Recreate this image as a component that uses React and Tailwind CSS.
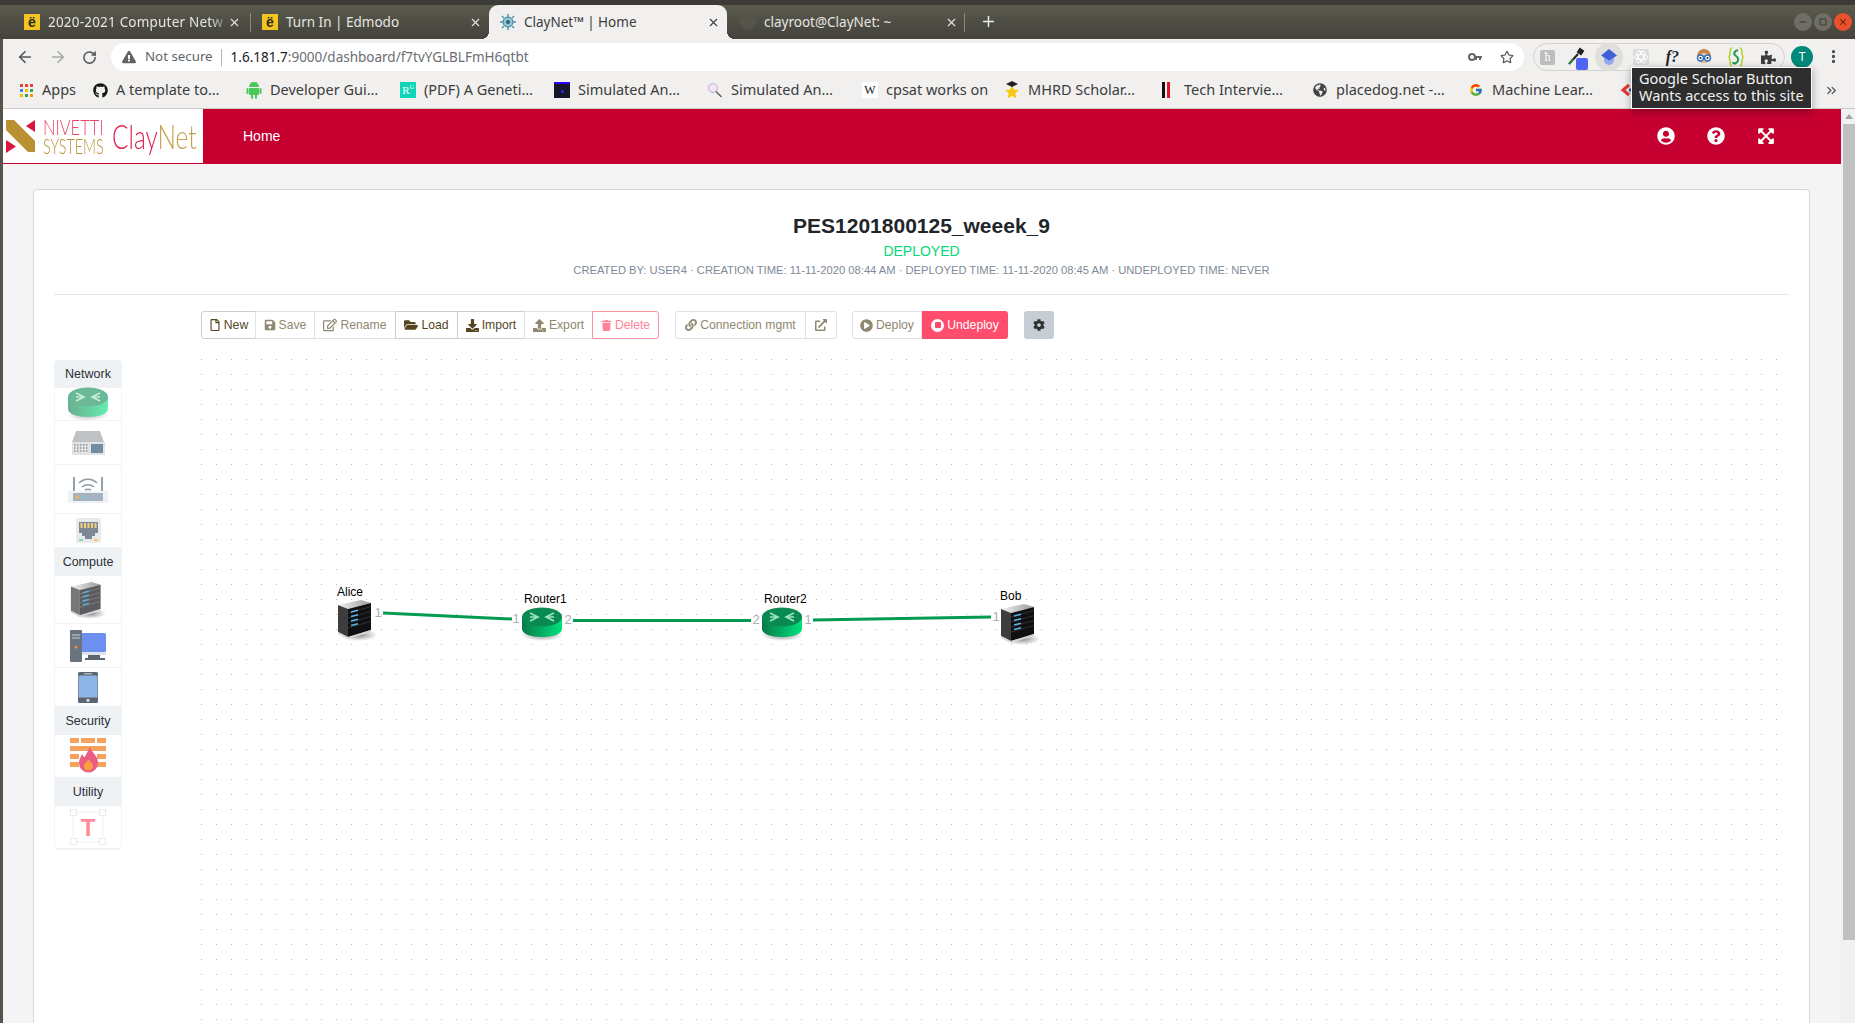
import React from 'react';
import { FaRegFile, FaSave, FaRegEdit, FaFolderOpen, FaDownload, FaUpload, FaTrash, FaLink, FaExternalLinkAlt, FaPlayCircle, FaCog, FaUserCircle, FaQuestionCircle, FaExpandArrowsAlt, FaGithub, FaGlobeAmericas, FaPuzzlePiece, FaExclamationTriangle, FaRegStar } from 'react-icons/fa';
import { FcGoogle } from 'react-icons/fc';
import { ArrowLeft, ArrowRight, RotateCw, X, Plus, Minus, Square, ChevronsRight, EllipsisVertical } from 'lucide-react';

const uiFont = "font-['Noto_Sans',sans-serif]";

const EdmodoIcon = () => (
  <span className="flex h-4 w-4 items-center justify-center bg-[#f4c522] font-['Liberation_Sans',sans-serif] text-[14px] font-bold leading-none text-[#2d2a1e]">ë</span>
);

const ClayIcon = () => (
  <svg width="16" height="16" viewBox="0 0 16 16">
    <circle cx="8" cy="8" r="5" fill="#8fc7d8" stroke="#3d7f97" strokeWidth="1" />
    <circle cx="8" cy="8" r="2" fill="#2a6078" />
    <path d="M8 0v3M8 13v3M0 8h3M13 8h3M2 2l2 2M12 12l2 2M14 2l-2 2M4 12l-2 2" stroke="#4b8fa6" strokeWidth="1.4" />
  </svg>
);

const tabs = [
  { title: '2020-2021 Computer Netw', icon: <EdmodoIcon />, fade: true },
  { title: 'Turn In | Edmodo', icon: <EdmodoIcon /> },
  { title: 'ClayNet™ | Home', icon: <ClayIcon />, active: true },
  { title: 'clayroot@ClayNet: ~', icon: <span className="h-4 w-4 rounded-full bg-[#55544b]" />, pad: true },
];

const TabStrip = () => (
  <div className={`flex h-[39px] shrink-0 items-end border-t-[5px] border-[#3c3b37] bg-gradient-to-b from-[#5a5a4e] to-[#43423c] pl-[13px] ${uiFont}`}>
    {tabs.map((tab, i) => (
      <div key={tab.title} className={`relative flex h-[34px] w-[238px] items-center pr-[7px] text-[13.5px] ${tab.pad ? 'pl-[13px]' : 'pl-[11px]'} ${tab.active ? 'rounded-t-[9px] bg-[#f1f0ee] text-[#3c3c3c]' : 'text-[#e6e5e0]'}`}>
        {tab.active && <span className="absolute bottom-0 -left-[8px] h-2 w-2 bg-[radial-gradient(circle_at_0_0,transparent_8px,#f1f0ee_8px)]" />}
        {tab.active && <span className="absolute bottom-0 -right-[8px] h-2 w-2 bg-[radial-gradient(circle_at_100%_0,transparent_8px,#f1f0ee_8px)]" />}
        <span className="flex w-4 shrink-0 justify-center">{tab.icon}</span>
        <span className={`ml-[8px] flex-1 whitespace-nowrap ${tab.fade ? 'tracking-[0.2px] [mask-image:linear-gradient(to_right,black_88%,transparent)]' : ''}`}>{tab.title}</span>
        <X size={13} strokeWidth={2} className={`shrink-0 ${tab.fade ? '-translate-x-[3px]' : ''}`} />
        {(i === 0 || i === 3) && <span className="absolute right-0 top-[8px] h-[19px] w-px bg-[#8a897f]" />}
      </div>
    ))}
    <Plus size={17} strokeWidth={2} className="mb-[9px] ml-[15px] text-[#f0f0ea]" />
    <div className="mb-[8px] ml-auto mr-[3px] flex gap-[2px]">
      <span className="flex h-[18px] w-[18px] items-center justify-center rounded-full bg-[#6f6e66] text-[#33322d]"><Minus size={10} strokeWidth={2.5} /></span>
      <span className="flex h-[18px] w-[18px] items-center justify-center rounded-full bg-[#6f6e66] text-[#33322d]"><Square size={8} strokeWidth={2.5} /></span>
      <span className="flex h-[18px] w-[18px] items-center justify-center rounded-full bg-[#e9502c] text-[#5a1d0c]"><X size={10} strokeWidth={2.5} /></span>
    </div>
  </div>
);

const Toolbar = () => (
  <div className={`flex h-[35px] items-start bg-[#f1f0ee] pl-[5px] pt-[4px] ${uiFont}`}>
    <span className="flex h-[28px] w-[33px] items-center justify-center text-[#555]"><ArrowLeft size={18} strokeWidth={2.2} /></span>
    <span className="flex h-[28px] w-[33px] items-center justify-center text-[#a9a9a7]"><ArrowRight size={18} strokeWidth={2.2} /></span>
    <span className="flex h-[28px] w-[31px] items-center justify-center text-[#555]"><RotateCw size={15} strokeWidth={2.4} /></span>
    <div className="ml-[6px] flex h-[28px] w-[1413px] items-center rounded-full bg-white pl-[11px] pr-[10px]">
      <FaExclamationTriangle size={14} className="text-[#5f6368]" />
      <span className="ml-[9px] text-[13.3px] text-[#5f6368]">Not secure</span>
      <span className="ml-[8px] h-[17px] w-px bg-[#b5b5b5]" />
      <span className="ml-[9px] text-[13.5px] text-[#202124]">1.6.181.7<span className="text-[#6a6e73]">:9000/dashboard/f7tvYGLBLFmH6qtbt</span></span>
      <svg width="14" height="10" viewBox="0 0 14 10" className="ml-auto text-[#666]">
        <circle cx="4" cy="5" r="3" fill="none" stroke="currentColor" strokeWidth="2" />
        <path d="M7 4h7v2h-1v2h-2V6H9v2H7z" fill="currentColor" />
      </svg>
      <FaRegStar size={14} className="ml-[18px] text-[#555]" />
    </div>
    <div className="ml-[9px] flex h-[28px] w-[252px] items-center rounded-full border border-[#d4d3d0]">
      <span className="flex w-[27px] justify-center"><span className="flex h-[15px] w-[15px] items-center justify-center rounded-[2px] bg-[#bdbdbd] font-['Liberation_Serif',serif] text-[12px] leading-none text-white">ħ</span></span>
      <span className="relative flex w-[32px] justify-center">
        <svg width="20" height="20" viewBox="0 0 20 20"><path d="M2 17 11 7M11 5l2-3 3 2-2 3z" stroke="#222" strokeWidth="2" fill="#222" /><path d="M2 17 6 12" stroke="#2e8b3c" strokeWidth="2" /></svg>
        <span className="absolute -bottom-[3px] right-[5px] h-[12px] w-[12px] rounded-[2px] bg-[#4f63f5]" />
      </span>
      <span className="flex w-[32px] justify-center">
        <span className="flex h-[28px] w-[28px] items-center justify-center rounded-full bg-[#e0dfdc]">
          <svg width="18" height="18" viewBox="0 0 18 18">
            <path d="M4 9h10v3a5 5 0 0 1-10 0z" fill="#92aaf6" />
            <path d="M9 1l8 6.500-8 5-8-5z" fill="#3f5ed8" />
          </svg>
        </span>
      </span>
      <span className="flex w-[32px] justify-center">
        <svg width="16" height="16" viewBox="0 0 16 16"><rect width="16" height="16" rx="2" fill="#dcdcdc" /><g fill="none" stroke="#fff" strokeWidth="1"><ellipse cx="8" cy="8" rx="6.5" ry="2.6" /><ellipse cx="8" cy="8" rx="6.5" ry="2.6" transform="rotate(60 8 8)" /><ellipse cx="8" cy="8" rx="6.5" ry="2.6" transform="rotate(120 8 8)" /></g></svg>
      </span>
      <span className="flex w-[32px] justify-center font-['Liberation_Serif',serif] text-[16px] font-bold italic leading-none text-[#222]">f?</span>
      <span className="flex w-[32px] justify-center">
        <svg width="18" height="18" viewBox="0 0 18 18"><circle cx="9" cy="8" r="7" fill="#c9824a" /><circle cx="9" cy="10" r="5" fill="#f1c9a0" /><circle cx="5.5" cy="10" r="3" fill="#fff" stroke="#2f6fc4" strokeWidth="1.4" /><circle cx="12.5" cy="10" r="3" fill="#fff" stroke="#2f6fc4" strokeWidth="1.4" /><circle cx="5.5" cy="10" r="1" fill="#224" /><circle cx="12.5" cy="10" r="1" fill="#224" /></svg>
      </span>
      <span className="flex w-[32px] justify-center">
        <svg width="16" height="20" viewBox="0 0 16 20" fill="none"><path d="M4 1C1 1 3 6 1 10c2 4 0 9 3 9M12 1c3 0 1 5 3 9-2 4 0 9-3 9" stroke="#b5d334" strokeWidth="1.6" /><path d="M10 3C6 4 5 7 8 9s3 5 0 7c-2 1-3 0-3-1" stroke="#1d9a4c" strokeWidth="2" /></svg>
      </span>
      <span className="flex w-[32px] justify-center text-[#3c3c3c]"><FaPuzzlePiece size={15} /></span>
    </div>
    <span className="ml-[6px] flex h-[22px] w-[22px] translate-y-[3px] items-center justify-center rounded-full bg-[#00897b] text-[12px] text-white">T</span>
    <EllipsisVertical size={17} strokeWidth={2.6} className="ml-[12px] translate-y-[5px] text-[#444]" />
  </div>
);

const AppsIcon = () => (
  <span className="grid h-[13px] w-[13px] grid-cols-3 gap-[2px]">
    {['bg-[#ea4335]', 'bg-[#ea4335]', 'bg-[#ea4335]', 'bg-[#4285f4]', 'bg-[#fbbc05]', 'bg-[#34a853]', 'bg-[#fbbc05]', 'bg-[#34a853]', 'bg-[#f29900]'].map((c, i) => (
      <span key={i} className={c} />
    ))}
  </span>
);

const AndroidIcon = () => (
  <svg width="16" height="18" viewBox="0 0 16 18" fill="#4cc85a">
    <path d="M3 6a5 5 0 0 1 10 0z" />
    <path d="M5 1 6 3M11 1 10 3" stroke="#4cc85a" strokeWidth="0.8" />
    <rect x="3" y="7" width="10" height="7" rx="1" />
    <rect x="0.500" y="7" width="2" height="6" rx="1" />
    <rect x="13.500" y="7" width="2" height="6" rx="1" />
    <rect x="5" y="13" width="2" height="5" rx="1" />
    <rect x="9" y="13" width="2" height="5" rx="1" />
  </svg>
);

const bookmarks = [
  { w: 'w-[74px]', label: 'Apps', icon: <AppsIcon /> },
  { w: 'w-[154px]', label: 'A template to…', icon: <FaGithub size={15} className="text-[#161614]" /> },
  { w: 'w-[154px]', label: 'Developer Gui…', icon: <AndroidIcon /> },
  { w: 'w-[154px]', label: '(PDF) A Geneti…', icon: <span className="flex h-4 w-4 items-center justify-center bg-[#10d5b8] font-['Liberation_Serif',serif] text-[11px] leading-none text-white">R<sup className="text-[6px]">G</sup></span> },
  { w: 'w-[153px]', label: 'Simulated An…', icon: <span className="flex h-4 w-4 items-center justify-center border-t-2 border-[#2b00ff] bg-[#16162a]"><span className="h-[3px] w-[3px] rounded-full bg-[#2b2bff]" /></span> },
  { w: 'w-[155px]', label: 'Simulated An…', icon: <svg width="16" height="16" viewBox="0 0 16 16" fill="none"><circle cx="6" cy="6" r="4.5" fill="#f0e4f5" stroke="#c9a9d8" /><path d="M9 9.5 14.5 15" stroke="#666" strokeWidth="1.6" /></svg> },
  { w: 'w-[142px]', label: 'cpsat works on', icon: <span className="flex h-4 w-4 items-center justify-center bg-white font-['Liberation_Serif',serif] text-[12px] leading-none text-[#111]">W</span> },
  { w: 'w-[156px]', label: 'MHRD Scholar…', icon: <svg width="16" height="18" viewBox="0 0 16 18"><path d="M8 4l2 4.500 5 .5-3.700 3.300 1 5L8 15l-4.300 2.300 1-5L1 9l5-.5z" fill="#f6c915" /><path d="M8 0l6 3-6 3-6-3z" fill="#222" /></svg> },
  { w: 'w-[152px]', label: 'Tech Intervie…', icon: <span className="flex h-4 w-[12px] gap-[2px]"><span className="w-[3px] bg-[#111]" /><span className="w-[3px] bg-[#e4152b]" /></span> },
  { w: 'w-[156px]', label: 'placedog.net -…', icon: <FaGlobeAmericas size={14} className="text-[#444]" /> },
  { w: 'w-[152px]', label: 'Machine Lear…', icon: <FcGoogle size={14} /> },
  { w: 'w-[60px]', label: '', icon: <svg width="16" height="16" viewBox="0 0 16 16"><path d="M9 3 3 8l6 5" fill="none" stroke="#e53935" strokeWidth="3" /><path d="M9 8h6" stroke="#3f51b5" strokeWidth="3" /></svg> },
];

const BookmarksBar = () => (
  <div className={`relative flex h-[35px] items-center border-b border-[#c9c9c7] bg-[#f1f0ee] pb-[2px] pl-[15px] text-[14.5px] text-[#3c3c3c] ${uiFont}`}>
    {bookmarks.map((b, i) => (
      <div key={i} className={`flex items-center gap-[8px] overflow-hidden whitespace-nowrap ${b.w}`}>
        <span className="flex w-4 shrink-0 justify-center">{b.icon}</span>
        <span>{b.label}</span>
      </div>
    ))}
    <ChevronsRight size={15} strokeWidth={2.2} className="absolute right-[16px] text-[#555]" />
  </div>
);

const Logo = () => (
  <div className="flex h-[54px] w-[200px] shrink-0 items-center bg-white pl-[3px]">
    <svg width="30" height="33" viewBox="0 0 30 33" className="shrink-0">
      <path d="M0 0h8l21 21v11h-7L0 10z" fill="#bb9030" />
      <path d="M29 0v12l-9-6zM0 33V20l10 6.500z" fill="#dc1440" />
    </svg>
    <div className="ml-[7px] flex w-[60px] flex-col font-['Lato',sans-serif] text-[22px] font-light leading-[19px]">
      <span className="origin-left scale-x-[0.75] whitespace-nowrap text-[#e8476d]">NIVETTI</span>
      <span className="origin-left scale-x-[0.65] whitespace-nowrap text-[#b8923a]">SYSTEMS</span>
    </div>
    <span className="ml-[4px] h-[39px] w-px bg-[linear-gradient(#c7a24a_50%,#e03a60_50%)]" />
    <span className="ml-[5px] origin-left scale-x-[0.74] whitespace-nowrap font-['Lato',sans-serif] text-[33px] font-light leading-none text-[#dc1f4d]">Clay<span className="text-[#c4a04e]">Net</span></span>
  </div>
);

const Nav = () => (
  <div className="flex h-[55px] shrink-0 items-start bg-[#c50030] font-['Liberation_Sans',sans-serif]">
    <Logo />
    <span className="ml-[40px] mt-[19px] text-[14px] leading-[16px] text-white">Home</span>
    <div className="ml-auto mr-[66px] mt-[18px] flex gap-[32px] text-white">
      <FaUserCircle size={18} />
      <FaQuestionCircle size={18} />
      <FaExpandArrowsAlt size={18} />
    </div>
  </div>
);

const Btn = ({ w, icon, children, dark, first, last, className = '' }) => (
  <button className={`-ml-px flex h-[28px] items-center justify-center gap-[3px] border bg-white text-[12.2px] first:ml-0 ${w} ${first ? 'rounded-l-[3px]' : ''} ${last ? 'rounded-r-[3px]' : ''} ${className || (dark ? 'border-[#c9ced4] text-[#54451f]' : 'border-[#dfe2e6] text-[#8f8770]')}`}>
    {icon}
    {children && <span>{children}</span>}
  </button>
);

const ButtonBar = () => (
  <div className="ml-[147px] mt-[16px] flex h-[28px] font-['Liberation_Sans',sans-serif]">
    <div className="flex">
      <Btn w="w-[55px]" first dark icon={<FaRegFile size={12} />}>New</Btn>
      <Btn w="w-[60px]" icon={<FaSave size={12} />}>Save</Btn>
      <Btn w="w-[82px]" icon={<FaRegEdit size={14} />}>Rename</Btn>
      <Btn w="w-[63px]" dark icon={<FaFolderOpen size={14} />}>Load</Btn>
      <Btn w="w-[68px]" dark icon={<FaDownload size={13} />}>Import</Btn>
      <Btn w="w-[69px]" icon={<FaUpload size={13} />}>Export</Btn>
      <Btn w="w-[67px]" last icon={<FaTrash size={11} />} className="relative border-[#ff8fa3] text-[#ff8398]">Delete</Btn>
    </div>
    <div className="ml-[16px] flex">
      <Btn w="w-[131px]" first icon={<FaLink size={12} />}>Connection mgmt</Btn>
      <Btn w="w-[32px]" last icon={<FaExternalLinkAlt size={12} />} />
    </div>
    <div className="ml-[15px] flex">
      <Btn w="w-[70px]" first icon={<FaPlayCircle size={13} />}>Deploy</Btn>
      <button className="flex h-[28px] w-[86px] items-center justify-center gap-[3px] rounded-r-[3px] bg-[#ff4d6d] text-[12.2px] text-white">
        <span className="flex h-[13px] w-[13px] items-center justify-center rounded-full bg-white"><span className="h-[6px] w-[6px] rounded-[1px] bg-[#ff4d6d]" /></span>
        Undeploy
      </button>
    </div>
    <button className="ml-[16px] flex h-[28px] w-[30px] items-center justify-center rounded-[3px] bg-[#c7cdd4] text-[#2f3133]"><FaCog size={12} /></button>
  </div>
);

// node icons, used on the canvas and (faded) in the palette
const RouterIcon = ({ className = '' }) => (
  <svg width="42" height="34" viewBox="0 0 42 34" className={className}>
    <defs>
      <linearGradient id="routerSide" x1="0" x2="1" y1="0" y2="0">
        <stop offset="0" stopColor="#087a47" />
        <stop offset="1" stopColor="#00e27c" />
      </linearGradient>
      <radialGradient id="routerShadow">
        <stop offset="0" stopColor="#8a8a8a" />
        <stop offset="1" stopColor="#8a8a8a" stopOpacity="0" />
      </radialGradient>
    </defs>
    <ellipse cx="21" cy="28" rx="21" ry="6" fill="url(#routerShadow)" />
    <path d="M1 10v12c0 5 9 8 20 8s20-3 20-8V10z" fill="url(#routerSide)" />
    <ellipse cx="21" cy="10" rx="20" ry="9.500" fill="#0a8a52" />
    <path d="M9 6l8 4-8 4M33 6l-8 4 8 4M9 10h8M25 10h8" fill="none" stroke="#9fe3c2" strokeWidth="1.6" />
  </svg>
);

const ServerIcon = ({ className = '', muted }) => (
  <svg width="40" height="42" viewBox="0 0 40 42" className={className}>
    <defs>
      <linearGradient id="srvTop" x1="0" x2="1" y1="0" y2="0">
        <stop offset="0" stopColor="#f2f2f2" />
        <stop offset="1" stopColor="#9a9a9a" />
      </linearGradient>
      <radialGradient id="srvShadow">
        <stop offset="0" stopColor="#8a8a8a" />
        <stop offset="1" stopColor="#8a8a8a" stopOpacity="0" />
      </radialGradient>
    </defs>
    <ellipse cx="22" cy="36" rx="18" ry="6" fill="url(#srvShadow)" />
    <path d="M1 6 24 1 34 4 11 10z" fill="url(#srvTop)" />
    <path d="M1 6 11 10V38L1 33z" fill={muted ? '#77777a' : '#3d3d3d'} />
    <path d="M11 10 34 4V31L11 38z" fill={muted ? '#5c5c60' : '#101012'} />
    {[14, 19, 24, 29].map((y) => (
      <path key={y} d={`M11 ${y} 34 ${y - 6.5}`} stroke={muted ? '#86868a' : '#3a3a3a'} strokeWidth="0.8" />
    ))}
    {[13, 17.500, 22, 26.500].map((y) => (
      <path key={y} d={`M14 ${y} 21 ${y - 1.8}`} stroke="#58b6e8" strokeWidth="1.4" />
    ))}
    <path d="M1 33 11 38 34 31V33L11 40 1 35z" fill="#d6d6d6" />
  </svg>
);

const SwitchIcon = () => (
  <svg width="34" height="26" viewBox="0 0 34 26">
    <path d="M5 1h24l4 11H1z" fill="#bfc2c5" />
    <rect x="1" y="12" width="33" height="13" fill="#e2e3e4" />
    <path d="M3 15h14M3 18h14M3 21h14" stroke="#666" strokeWidth="1.200" strokeDasharray="1.500 1.500" />
    <rect x="20" y="14" width="12" height="9" fill="#6f8ea3" />
  </svg>
);

const WifiIcon = () => (
  <svg width="40" height="27" viewBox="0 0 40 27" fill="none">
    <path d="M6 1v15M34 1v15" stroke="#8fa0b1" strokeWidth="2" />
    <path d="M11 7c5-5 13-5 18 0M14 11c4-3 8-3 12 0M17 14c2-1 4-1 6 0" stroke="#8f9aa6" strokeWidth="1.500" />
    <rect y="15" width="40" height="12" fill="#eef2f5" />
    <rect x="5" y="17" width="30" height="8" rx="1" fill="#a5b2bf" />
    <circle cx="9" cy="21" r="2" fill="#f2b25a" />
    <circle cx="14" cy="21" r="1" fill="#6fc8e5" />
    <circle cx="18" cy="21" r="1" fill="#6fc8e5" />
  </svg>
);

const PortIcon = () => (
  <svg width="25" height="25" viewBox="0 0 25 25">
    <rect width="25" height="25" rx="2" fill="#e8eaec" />
    <path d="M3 4h19v11h-3v3h-3v3H9v-3H6v-3H3z" fill="#7c8896" />
    <path d="M5.500 5v5M9 5v5M12.500 5v5M16 5v5M19.500 5v5" stroke="#f4d27a" strokeWidth="2" />
    <rect x="3" y="21" width="4" height="2" fill="#7fe0a5" />
    <rect x="18" y="21" width="4" height="2" fill="#f6c26b" />
  </svg>
);

const DesktopIcon = () => (
  <svg width="36" height="32" viewBox="0 0 36 32">
    <rect x="9" y="3" width="27" height="19" rx="1.500" fill="#6d8ff0" />
    <path d="M18 22h12v6h5v2H15v-2h3z" fill="#5c6670" />
    <path d="M12 22h24v3H12z" fill="#dfe4ea" />
    <rect width="12" height="32" rx="1" fill="#6a7480" />
    <path d="M2 5h8M2 8h8" stroke="#a9b1ba" strokeWidth="1.500" />
    <circle cx="6" cy="17" r="1.600" fill="#ef8a3c" />
  </svg>
);

const TabletIcon = () => (
  <svg width="20" height="31" viewBox="0 0 20 31">
    <rect width="20" height="31" rx="1.500" fill="#5b6570" />
    <rect x="0.500" y="3.500" width="19" height="22" fill="#8fb4e6" />
    <rect x="6" y="1.300" width="8" height="1" fill="#d8dde2" />
    <circle cx="10" cy="28.300" r="1.600" fill="#d8dde2" />
  </svg>
);

const FirewallIcon = () => (
  <svg width="36" height="36" viewBox="0 0 36 36">
    <g fill="#f6a15d">
      <rect y="0" width="9" height="5" />
      <rect x="11" y="0" width="14" height="5" />
      <rect x="27" y="0" width="9" height="5" />
      <rect y="8" width="36" height="5" />
      <rect y="16" width="9" height="5" />
      <rect x="27" y="16" width="9" height="5" />
      <rect y="24" width="9" height="5" />
      <rect x="27" y="24" width="9" height="5" />
    </g>
    <path d="M20 9c1 5 8 8 8 16a9.500 9.500 0 0 1-19 0c0-4 2-6 3-9 1 2 2 3 3 3 1-3 3-6 5-10z" fill="#ec5d84" />
    <path d="M19 21c0 3 4 4 4 7a4.500 4.500 0 0 1-9 0c0-3 3-4 5-7z" fill="#f9a03f" />
  </svg>
);

const TextIcon = () => (
  <svg width="36" height="36" viewBox="0 0 36 36">
    <rect x="3" y="3" width="30" height="30" fill="none" stroke="#eef2f5" strokeWidth="1.200" />
    {[[0, 0], [29, 0], [0, 29], [29, 29]].map(([x, y]) => (
      <rect key={`${x}-${y}`} x={x + 0.5} y={y + 0.5} width="6" height="6" fill="#fff" stroke="#e6ecf0" strokeWidth="1.200" />
    ))}
    <text x="18" y="27" textAnchor="middle" fontFamily="Liberation Sans, sans-serif" fontWeight="700" fontSize="24" fill="#ff8b98">T</text>
  </svg>
);

const PaletteHead = ({ children, first }) => (
  <div className={`flex h-[28px] items-center justify-center bg-[#eef2f5] text-[12.5px] text-[#2a2f35] ${first ? 'rounded-t-[4px]' : ''}`}>{children}</div>
);

const PaletteRow = ({ h, children }) => (
  <div className={`flex items-center justify-center border-b border-[#f1f3f5] ${h}`}>{children}</div>
);

const Palette = () => (
  <div className="mt-[8px] h-fit w-[68px] shrink-0 rounded-[4px] border-x border-b border-[#f2f4f6] font-['Liberation_Sans',sans-serif]">
    <PaletteHead first>Network</PaletteHead>
    <PaletteRow h="h-[33px]"><RouterIcon className="opacity-60" /></PaletteRow>
    <PaletteRow h="h-[44px]"><SwitchIcon /></PaletteRow>
    <PaletteRow h="h-[49px]"><WifiIcon /></PaletteRow>
    <PaletteRow h="h-[34px]"><PortIcon /></PaletteRow>
    <PaletteHead>Compute</PaletteHead>
    <PaletteRow h="h-[48px]"><ServerIcon muted className="scale-90" /></PaletteRow>
    <PaletteRow h="h-[44px]"><DesktopIcon /></PaletteRow>
    <PaletteRow h="h-[39px]"><TabletIcon /></PaletteRow>
    <PaletteHead>Security</PaletteHead>
    <PaletteRow h="h-[43px]"><FirewallIcon /></PaletteRow>
    <PaletteHead>Utility</PaletteHead>
    <PaletteRow h="h-[43px]"><TextIcon /></PaletteRow>
  </div>
);

// canvas origin sits at x=194, y=352 on the page
const links = [
  [189, 261, 318, 267],
  [379, 268.500, 557, 268.500],
  [619, 268, 797, 265],
];

const labels = [
  { text: 'Alice', x: 143, y: 233 },
  { text: 'Router1', x: 330, y: 240 },
  { text: 'Router2', x: 570, y: 240 },
  { text: 'Bob', x: 806, y: 237 },
];

const ports = [
  { text: '1', x: 184, y: 261 },
  { text: '1', x: 322, y: 267 },
  { text: '2', x: 374, y: 268 },
  { text: '2', x: 562, y: 268 },
  { text: '1', x: 614, y: 268 },
  { text: '1', x: 802, y: 265 },
];

const Canvas = () => (
  <div className="relative ml-[72px] h-[700px] w-[1590px] bg-[radial-gradient(circle,#b8b8b8_0.7px,transparent_1px)] bg-[size:15px_15px] font-['Liberation_Sans',sans-serif]">
    <svg className="absolute left-0 top-0" width="1000" height="400">
      {links.map(([x1, y1, x2, y2]) => (
        <line key={x1} x1={x1} y1={y1} x2={x2} y2={y2} stroke="#009a50" strokeWidth="3" />
      ))}
    </svg>
    {labels.map((l) => (
      <span key={l.text} className="absolute text-[12px] leading-[14px] text-black" style={{ left: l.x, top: l.y }}>{l.text}</span>
    ))}
    <ServerIcon className="absolute left-[143px] top-[247px]" />
    <RouterIcon className="absolute left-[327px] top-[255px]" />
    <RouterIcon className="absolute left-[567px] top-[255px]" />
    <ServerIcon className="absolute left-[806px] top-[251px]" />
    {ports.map((p, i) => (
      <span key={i} className="absolute -translate-x-1/2 -translate-y-1/2 text-[13px] leading-[14px] text-[#aeaeb4]" style={{ left: p.x, top: p.y }}>{p.text}</span>
    ))}
  </div>
);

const Card = () => (
  <div className="ml-[30px] mr-[31px] mt-[25px] rounded-[4px] border border-[#d5d8dc] bg-white px-[20px] pb-[40px] pt-[22px] font-['Liberation_Sans',sans-serif]">
    <h1 className="text-center text-[21px] font-bold leading-[28px] text-[#212529]">PES1201800125_weeek_9</h1>
    <div className="mt-[2px] text-center text-[14px] leading-[18px] text-[#06d77b]">DEPLOYED</div>
    <div className="mt-[2px] text-center text-[11.2px] leading-[16px] text-[#7e8a98]">CREATED BY: USER4 · CREATION TIME: 11-11-2020 08:44 AM · DEPLOYED TIME: 11-11-2020 08:45 AM · UNDEPLOYED TIME: NEVER</div>
    <hr className="mt-[16px] border-[#e4e6e9]" />
    <ButtonBar />
    <div className="mt-[13px] flex">
      <Palette />
      <Canvas />
    </div>
  </div>
);

const Scrollbar = () => (
  <div className="flex w-[14px] shrink-0 flex-col items-end bg-[#f1f1f1]">
    <span className="mr-[2px] mt-[5px] h-0 w-0 border-x-[4px] border-b-[5px] border-x-transparent border-b-[#a3a3a3]" />
    <span className="mt-[5px] h-[816px] w-[12px] bg-[#c1c1c1]" />
  </div>
);

export default function App() {
  return (
    <div className="relative flex h-screen w-full flex-col overflow-hidden bg-[#f4f4f4]">
      <TabStrip />
      <div className="flex min-h-0 flex-1 flex-col border-l-[3px] border-[#57534a]">
        <Toolbar />
        <BookmarksBar />
        <div className="flex min-h-0 flex-1">
          <div className="min-w-0 flex-1 overflow-hidden">
            <Nav />
            <Card />
          </div>
          <Scrollbar />
        </div>
      </div>
      <div className={`absolute left-[1631px] top-[67px] border border-white bg-[#2e2e2e] px-[7px] pb-[4px] pt-[2px] text-[14.5px] leading-[17px] text-[#f2f2f2] shadow-[0_2px_8px_rgba(0,0,0,0.35)] ${uiFont}`}>
        <div>Google Scholar Button</div>
        <div>Wants access to this site</div>
      </div>
    </div>
  );
}
